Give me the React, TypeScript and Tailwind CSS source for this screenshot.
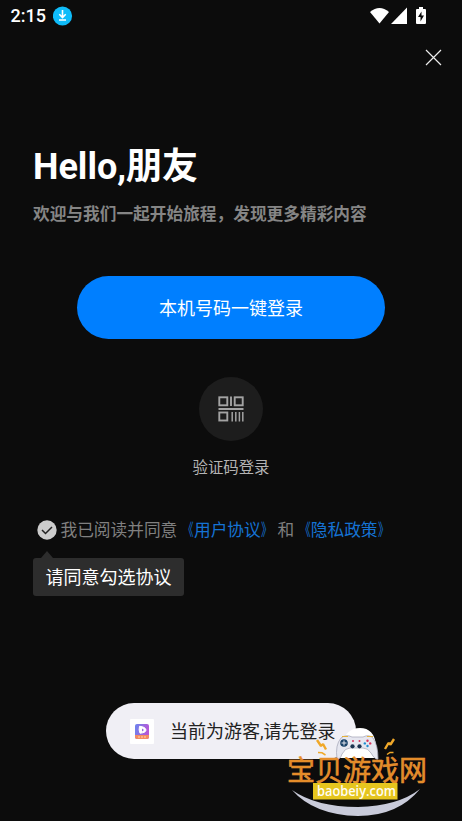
import React from "react";

const cjk = "font-[Roboto,'Noto_Sans_CJK_SC',sans-serif]";

function StatusBar() {
  return (
    <header className="flex h-8 items-center pl-[10.5px] pr-[35px] text-white">
      <span className="w-[42.5px] text-[18px] leading-none font-medium">2:15</span>
      <svg width="20" height="20" viewBox="0 0 20 20" className="mt-[-1px]">
        <circle cx="9.5" cy="10" r="9.6" fill="#0fbcfa" />
        <path d="M9.5 4v7M6.3 8.3l3.2 3.2 3.2-3.2M6 14h7" fill="none" stroke="#fff" strokeWidth="1.6" />
      </svg>
      <svg width="58" height="20" viewBox="0 0 58 20" className="ml-auto mt-[-1px]" fill="#fff">
        <path d="M1 6Q10.500 -2 20 6L10.500 17.500Z" />
        <path d="M38 1.500V18H22Z" />
        <path d="M50 1h4v2h2q1 0 1 1v13q0 1-1 1h-8q-1 0-1-1V4q0-1 1-1h2Z" />
        <path d="M52.500 5.500v4h2.500l-3.500 6v-4.500h-2.500Z" fill="#0c0c0c" />
      </svg>
    </header>
  );
}

function QrIcon() {
  return (
    <svg width="26" height="26" viewBox="0 0 26 26" fill="none" stroke="#a3a3a3" strokeWidth="1.900">
      <rect x="1.300" y="1.300" width="8" height="8" />
      <rect x="16.700" y="1.300" width="8" height="8" />
      <rect x="1.300" y="16.500" width="8" height="8" />
      <path d="M13 .5v9.500M.5 13H25.500" />
      <path d="M14.200 16v9.500M17.800 16v9.500M21.400 16v9.500M24.800 16v9.500" strokeWidth="1.500" />
    </svg>
  );
}

function AppIcon() {
  return (
    <svg width="24" height="25" viewBox="0 0 24 25">
      <defs>
        <linearGradient id="app" x1="0" y1="0" x2="1" y2="0.3">
          <stop offset="0" stopColor="#6a86ee" />
          <stop offset="1" stopColor="#b857d7" />
        </linearGradient>
      </defs>
      <rect width="24" height="25" rx="1" fill="#fff" />
      <rect x="5" y="5" width="14" height="15" rx="2" fill="url(#app)" />
      <path d="M5 16h14v2q0 2-2 2H7q-2 0-2-2Z" fill="#f58b62" />
      <path d="M9.500 7.300q6 .5 6.500 3.700 0 2.700-6 3.200-1.500-3.200-.5-6.900Z" fill="#fff" stroke="#fff" strokeLinejoin="round" />
      <path d="M12 9.600l2 1.400-2 1.400Z" fill="#9267df" />
      <path d="M8 18h8" stroke="#ffd9a8" strokeDasharray="2 1" />
    </svg>
  );
}

function Watermark() {
  return (
    <div className="absolute left-[286px] top-[725px] h-[96px] w-[144px]">
      <svg width="144" height="96" viewBox="0 0 144 96">
        <path d="M6 65Q30 82 72 82Q112 81 134 64Q112 91 72 91Q28 90 6 65Z" fill="#c9cbda" />
        <path d="M55 20Q60 3 74 3Q88 3 90 20L91 33H54V20Z" fill="#fff" />
        <path d="M51 34Q49 20 55 13Q60 9 66 12H77Q83 9 87 13Q92 20 92 34Q89 35 85 28Q82 23 77 23H64Q59 23 56 29Q54 35 51 34Z" fill="#e6e7f0" stroke="#a9abbb" strokeWidth=".8" />
        <path d="M57 33q2-8 7-9h13q6 1 8 9Z" fill="#fff" />
        <circle cx="58" cy="18" r="3.800" fill="#174067" />
        <path d="M58 15.500v5M55.500 18h5" stroke="#e6e7f0" />
        <circle cx="81.500" cy="15.800" r="1.200" fill="#d9345c" />
        <circle cx="81.500" cy="21" r="1.200" fill="#208ccf" />
        <circle cx="78.800" cy="18.400" r="1.200" fill="#208ccf" />
        <circle cx="84.200" cy="18.400" r="1.200" fill="#d9345c" />
        <circle cx="67" cy="16" r="1" fill="#d9345c" />
        <circle cx="73.500" cy="16" r="1" fill="#d9345c" />
        <circle cx="66.500" cy="21.300" r="2.100" fill="#1d3450" />
        <circle cx="73.500" cy="21.300" r="2.100" fill="#1d3450" />
        <path d="M56 11.500h6M81 11.500h6" stroke="#e5b33d" />
        <path d="M31 15l4 6 2-2 3 5.500M108 14l-3.500 5.500-2-1.500-3.500 6" fill="none" stroke="#f0a829" strokeWidth="2.400" strokeLinejoin="bevel" />
        <path d="M32 27.500l4 .3 3.500 2.200M101 29.500l3-2 3.500 0" fill="none" stroke="#f0a829" strokeWidth="1.500" />
        <text x="1" y="55.500" textLength="140" className="font-['Noto_Sans_CJK_SC',sans-serif] text-[28px] font-normal" fill="#e48a25" stroke="#e9973b" strokeWidth=".5">宝贝游戏网</text>
        <rect x="27" y="58" width="84.500" height="16.500" fill="#e5c51e" />
        <text x="31" y="70.500" textLength="79" lengthAdjust="spacingAndGlyphs" className="font-['Open_Sans',sans-serif] text-[14px] font-semibold" fill="#fffdf2">baobeiy.com</text>
      </svg>
    </div>
  );
}

function PolicyLink({ children }: { children: string }) {
  return (
    <span className="text-[#1573d4]">
      <span className="inline-block origin-right scale-x-65">《</span>
      {children}
      <span className="inline-block origin-left scale-x-65">》</span>
    </span>
  );
}

export default function App() {
  return (
    <main lang="zh-CN" className={`relative h-[821px] w-[462px] overflow-hidden bg-[#0c0c0c] ${cjk}`}>
      <StatusBar />
      <div className="flex h-[52px] justify-end pr-5 pt-[17px]">
        <svg width="17" height="17" viewBox="0 0 17 17" stroke="#ececec" strokeWidth="1.200">
          <path d="M1 1l15 15M16 1L1 16" />
        </svg>
      </div>
      <section className="pl-[33px] pt-[57px]">
        <h1 className="h-[52px] text-[36px] leading-[52px] font-bold text-white">Hello,朋友</h1>
        <p className="mt-[9px] text-[16.7px] leading-[26px] font-bold text-[#858585]">欢迎与我们一起开始旅程，发现更多精彩内容</p>
      </section>
      <button className="mx-auto mt-[48px] block h-[63px] w-[308px] rounded-full bg-[#007fff] pt-px text-[18px] text-white">本机号码一键登录</button>
      <div className="mt-[38px] flex flex-col items-center">
        <div className="flex size-16 items-center justify-center rounded-full bg-[#1d1d1d]"><QrIcon /></div>
        <span className="mt-[15px] text-[15.4px] leading-6 text-[#b4b4b4]">验证码登录</span>
      </div>
      <div className="mt-[38px] flex h-6 items-center pl-[37px]">
        <svg width="20" height="20" viewBox="0 0 20 20">
          <circle cx="10" cy="10" r="9.700" fill="#ccc" />
          <path d="M5 10l3.500 3.500 6.500-6.500" fill="none" stroke="#222" strokeWidth="1.500" />
        </svg>
        <p className="ml-[3.500px] whitespace-nowrap pt-px text-[16.7px] leading-6 text-[#808080]">
          我已阅读并同意<PolicyLink>用户协议</PolicyLink>和<PolicyLink>隐私政策</PolicyLink>
        </p>
      </div>
      <div className="ml-[33px] mt-[9px] w-[151px]">
        <svg width="12" height="7" viewBox="0 0 12 7" className="ml-2 block"><path d="M0 7L6 0l6 7Z" fill="#2d2d2d" /></svg>
        <div className="flex h-[38px] items-center justify-center rounded-[3px] bg-[#2d2d2d] text-[18px] text-white">请同意勾选协议</div>
      </div>
      <div className="ml-[106px] mt-[107px] flex h-[56px] w-[250px] items-center rounded-full bg-[#f0eff5] pl-6">
        <AppIcon />
        <span className="ml-4 whitespace-nowrap text-[18px] text-[#222]">当前为游客,请先登录</span>
      </div>
      <Watermark />
    </main>
  );
}
